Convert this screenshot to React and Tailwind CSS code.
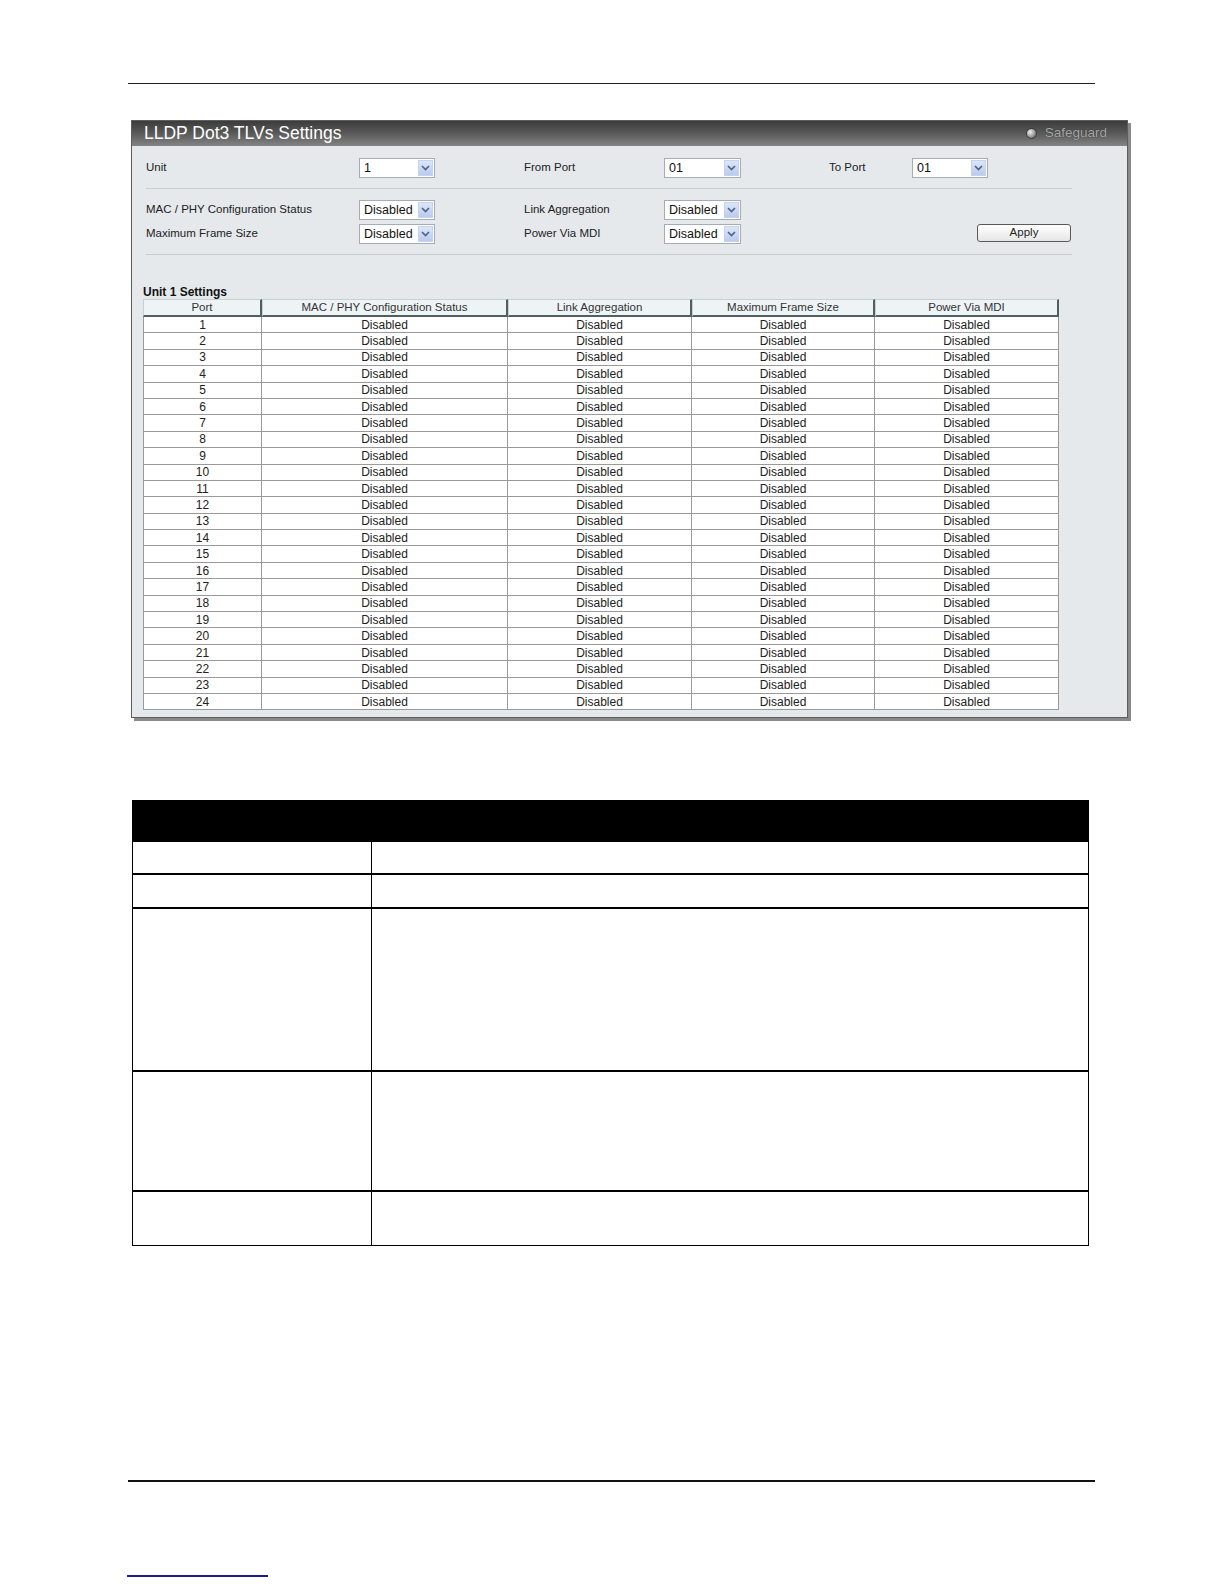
import React from 'react';

const cols = [
  { label: 'Port', w: 'w-[119px]' },
  { label: 'MAC / PHY Configuration Status', w: 'w-[246px]' },
  { label: 'Link Aggregation', w: 'w-[184px]' },
  { label: 'Maximum Frame Size', w: 'w-[183px]' },
  { label: 'Power Via MDI', w: 'w-[184px]' },
];

function Select({ value, wide }) {
  return (
    <div className={`${wide ? 'w-[77px]' : 'w-[76px]'} h-[20px] bg-white border border-[#a5acb5] flex items-center justify-between pl-[4px] pr-[1px]`}>
      <span className="text-[12.5px] text-[#111]">{value}</span>
      <div className="w-[15px] h-[16px] bg-gradient-to-b from-[#dce6f7] to-[#b9cbef] border border-[#c6d3ee] flex items-center justify-center">
        <svg width="9" height="6" viewBox="0 0 9 6">
          <path d="M1 1 L4.5 4.5 L8 1" fill="none" stroke="#4d6185" strokeWidth="1.6" />
        </svg>
      </div>
    </div>
  );
}

function FormRow({ l1, v1, l2, v2, l3, v3, apply }) {
  return (
    <div className="flex items-center h-[20px] text-[11.5px] text-[#222]">
      <span className="w-[213px]">{l1}</span>
      <Select value={v1} />
      <span className="w-[89px]" />
      <span className="w-[140px]">{l2}</span>
      <Select value={v2} wide />
      {l3 && (
        <>
          <span className="w-[88px]" />
          <span className="w-[83px]">{l3}</span>
          <Select value={v3} />
        </>
      )}
      {apply && (
        <>
          <span className="w-[236px]" />
          <button className="self-start w-[94px] h-[18px] border border-[#5a5a5a] rounded-[3px] bg-gradient-to-b from-white to-[#e6e6e6] text-[11.5px] text-[#222] leading-none">
            Apply
          </button>
        </>
      )}
    </div>
  );
}

export default function App() {
  const ports = Array.from({ length: 24 }, (_, i) => i + 1);

  return (
    <div className="w-full min-h-screen bg-white font-['Liberation_Sans',Arial,sans-serif] pt-[83px] flex flex-col">
      <div className="ml-[128px] w-[967px] h-px bg-[#222]" />

      {/* Screenshot panel */}
      <div className="ml-[131px] mt-[36px] w-[997px] h-[598px] border border-[#5d5d5d] bg-[#e5e9ec] shadow-[3px_3px_0_#8a8a8a] flex flex-col">
        <div className="h-[25px] bg-gradient-to-b from-[#3c3c3c] via-[#5a5a5a] to-[#858585] flex items-center justify-between pl-[12px] pr-[20px]">
          <span className="text-white text-[17.5px] leading-none">LLDP Dot3 TLVs Settings</span>
          <div className="flex items-center gap-[8px]">
            <span className="w-[11px] h-[11px] rounded-full bg-[radial-gradient(circle_at_35%_35%,#f0f0f0,#9a9a9a_55%,#4a4a4a)] border border-[#3a3a3a]" />
            <span className="text-[13.5px] text-[#a8a8a8] [text-shadow:0_0_1px_#222]">Safeguard</span>
          </div>
        </div>

        <div className="pl-[14px] pt-[12px] flex flex-col">
          <FormRow l1="Unit" v1="1" l2="From Port" v2="01" l3="To Port" v3="01" />
          <div className="mt-[10px] w-[926px] h-px bg-[#c9cdd0]" />
          <div className="mt-[11px] flex flex-col gap-[4px]">
            <FormRow l1="MAC / PHY Configuration Status" v1="Disabled" l2="Link Aggregation" v2="Disabled" />
            <FormRow l1="Maximum Frame Size" v1="Disabled" l2="Power Via MDI" v2="Disabled" apply />
          </div>
          <div className="mt-[10px] w-[926px] h-px bg-[#c9cdd0]" />
        </div>

        <div className="ml-[11px] mt-[30px] text-[12px] font-bold text-[#111] leading-[14px]">Unit 1 Settings</div>
        <div className="ml-[11px] w-[916px] flex flex-col">
          <div className="flex h-[18px]">
            {cols.map(c => (
              <div
                key={c.label}
                className={`${c.w} border-t border-l border-[#c5d1d5] border-r-2 border-r-[#4f5f64] border-b-2 border-b-[#4f5f64] bg-[#eef4f6] text-[11.5px] text-[#333] flex items-center justify-center leading-none`}
              >
                {c.label}
              </div>
            ))}
          </div>
          {ports.map(p => (
            <div key={p} className="flex h-[16.4px]">
              {cols.map((c, ci) => (
                <div
                  key={c.label}
                  className={`${c.w} bg-white border-b border-r border-[#9a9a9a] ${ci === 0 ? 'border-l' : ''} text-[12px] text-[#222] flex items-center justify-center leading-none`}
                >
                  {ci === 0 ? p : 'Disabled'}
                </div>
              ))}
            </div>
          ))}
        </div>
      </div>

      {/* Parameter description table */}
      <div className="ml-[132px] mt-[82px] w-[957px] border border-black flex flex-col">
        <div className="h-[39px] bg-black" />
        {[33, 34, 163, 120, 55].map((h, i) => (
          <div key={i} className="flex border-t-2 border-black" style={{ height: h }}>
            <div className="w-[239px] border-r border-black" />
            <div className="flex-1" />
          </div>
        ))}
      </div>

      <div className="ml-[128px] mt-[234px] w-[967px] h-[2px] bg-[#111]" />
      <div className="ml-[127px] mt-[93px] w-[141px] h-[2px] bg-[#1b1b8a]" />
    </div>
  );
}
